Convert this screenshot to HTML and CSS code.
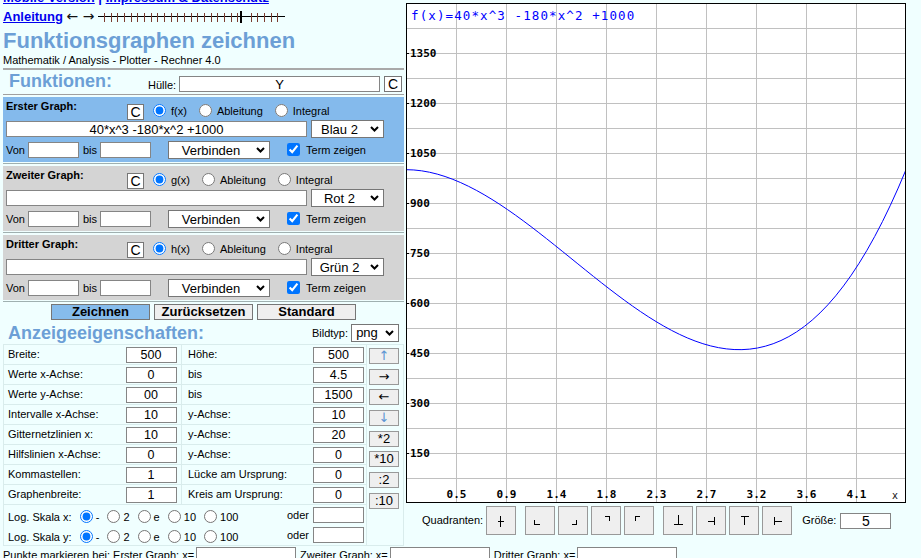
FILE: index.html
```html
<!DOCTYPE html>
<html lang="de">
<head>
<meta charset="utf-8">
<title>Funktionsgraphen zeichnen</title>
<link rel="stylesheet" href="styles.css">
</head>
<body>
<div class="page">
  <div class="main">
    <div class="left">
      <div class="links"><a href="#">Mobile Version</a> | <a href="#">Impressum &amp; Datenschutz</a></div>
      <div class="nav"><a href="#">Anleitung</a> <span class="arrows">← →</span> <svg class="ruler" width="190" height="13" viewBox="0 0 190 13"><path d="M0 5.5H187" stroke="#000" stroke-width="1"/><path d="M6.5 2V11M13.5 2V11M19.5 2V11M26.5 2V11M33.5 2V11M39.5 2V11M46.5 2V11M53.5 2V11M59.5 2V11M66.5 2V11M73.5 2V11M79.5 2V11M86.5 2V11M93.5 2V11M99.5 2V11M106.5 2V11M113.5 2V11M119.5 2V11M126.5 2V11M133.5 2V11M139.5 2V11M153.5 2V11M159.5 2V11M166.5 2V11M173.5 2V11M179.5 2V11" stroke="#7a3b2e" stroke-width="1"/><path d="M143 0V12" stroke="#000" stroke-width="2"/></svg></div>
      <h1 class="title">Funktionsgraphen zeichnen</h1>
      <div class="subtitle">Mathematik / Analysis - Plotter - Rechner 4.0</div>
      <div class="rule"></div>

      <div class="funchead">
        <h2 class="heading fh">Funktionen:</h2>
        <span class="huelle-label">Hülle:</span>
        <input class="txt huelle" type="text" value="Y">
        <button class="cbtn cbtn-h">C</button>
      </div>

      <div class="gsec blue">
        <div class="grow1">
          <span class="gtitle">Erster Graph:</span>
          <button class="cbtn">C</button>
          <label class="opt first"><input type="radio" name="t1" checked><span>f(x)</span></label>
          <label class="opt"><input type="radio" name="t1"><span>Ableitung</span></label>
          <label class="opt"><input type="radio" name="t1"><span>Integral</span></label>
        </div>
        <div class="grow2">
          <input class="txt term" type="text" value="40*x^3 -180*x^2 +1000">
          <span class="sel colsel"><select><option>Blau 2</option></select><svg class="chev" width="9" height="6" viewBox="0 0 9 6"><path d="M1 1L4.5 4.5L8 1" fill="none" stroke="#000" stroke-width="2"/></svg></span>
        </div>
        <div class="grow3">
          <span>Von</span><input class="txt small" type="text"><span class="bis">bis</span><input class="txt small" type="text">
          <span class="sel modesel"><select><option>Verbinden</option></select><svg class="chev" width="9" height="6" viewBox="0 0 9 6"><path d="M1 1L4.5 4.5L8 1" fill="none" stroke="#000" stroke-width="2"/></svg></span>
          <label class="chk"><input type="checkbox" checked><span>Term zeigen</span></label>
        </div>
      </div>
      <div class="sep"></div>

      <div class="gsec gray">
        <div class="grow1">
          <span class="gtitle">Zweiter Graph:</span>
          <button class="cbtn">C</button>
          <label class="opt first"><input type="radio" name="t2" checked><span>g(x)</span></label>
          <label class="opt"><input type="radio" name="t2"><span>Ableitung</span></label>
          <label class="opt"><input type="radio" name="t2"><span>Integral</span></label>
        </div>
        <div class="grow2">
          <input class="txt term" type="text" value="">
          <span class="sel colsel"><select><option>Rot 2</option></select><svg class="chev" width="9" height="6" viewBox="0 0 9 6"><path d="M1 1L4.5 4.5L8 1" fill="none" stroke="#000" stroke-width="2"/></svg></span>
        </div>
        <div class="grow3">
          <span>Von</span><input class="txt small" type="text"><span class="bis">bis</span><input class="txt small" type="text">
          <span class="sel modesel"><select><option>Verbinden</option></select><svg class="chev" width="9" height="6" viewBox="0 0 9 6"><path d="M1 1L4.5 4.5L8 1" fill="none" stroke="#000" stroke-width="2"/></svg></span>
          <label class="chk"><input type="checkbox" checked><span>Term zeigen</span></label>
        </div>
      </div>
      <div class="sep"></div>

      <div class="gsec gray">
        <div class="grow1">
          <span class="gtitle">Dritter Graph:</span>
          <button class="cbtn">C</button>
          <label class="opt first"><input type="radio" name="t3" checked><span>h(x)</span></label>
          <label class="opt"><input type="radio" name="t3"><span>Ableitung</span></label>
          <label class="opt"><input type="radio" name="t3"><span>Integral</span></label>
        </div>
        <div class="grow2">
          <input class="txt term" type="text" value="">
          <span class="sel colsel"><select><option>Grün 2</option></select><svg class="chev" width="9" height="6" viewBox="0 0 9 6"><path d="M1 1L4.5 4.5L8 1" fill="none" stroke="#000" stroke-width="2"/></svg></span>
        </div>
        <div class="grow3">
          <span>Von</span><input class="txt small" type="text"><span class="bis">bis</span><input class="txt small" type="text">
          <span class="sel modesel"><select><option>Verbinden</option></select><svg class="chev" width="9" height="6" viewBox="0 0 9 6"><path d="M1 1L4.5 4.5L8 1" fill="none" stroke="#000" stroke-width="2"/></svg></span>
          <label class="chk"><input type="checkbox" checked><span>Term zeigen</span></label>
        </div>
      </div>
      <div class="sep"></div>

      <div class="actions">
        <button class="act primary">Zeichnen</button>
        <button class="act">Zurücksetzen</button>
        <button class="act">Standard</button>
      </div>

      <div class="propshead">
        <h2 class="heading ph">Anzeigeeigenschaften:</h2>
        <span class="bildtyp">Bildtyp:</span>
        <span class="sel pngsel"><select><option>png</option></select><svg class="chev" width="9" height="6" viewBox="0 0 9 6"><path d="M1 1L4.5 4.5L8 1" fill="none" stroke="#000" stroke-width="2"/></svg></span>
      </div>

      <div class="props">
        <div class="btncol">
          <button class="pbtn arr up">↑</button>
          <button class="pbtn arr">→</button>
          <button class="pbtn arr">←</button>
          <button class="pbtn arr up">↓</button>
          <button class="pbtn">*2</button>
          <button class="pbtn">*10</button>
          <button class="pbtn">:2</button>
          <button class="pbtn">:10</button>
        </div>

        <div class="c lab1">Breite:</div><div class="c inp b1"><input class="txt val" type="text" value="500"></div><div class="c lab2">Höhe:</div><div class="c inp b2"><input class="txt val" type="text" value="500"></div>
        <div class="c lab1">Werte x-Achse:</div><div class="c inp b1"><input class="txt val" type="text" value="0"></div><div class="c lab2">bis</div><div class="c inp b2"><input class="txt val" type="text" value="4.5"></div>
        <div class="c lab1">Werte y-Achse:</div><div class="c inp b1"><input class="txt val" type="text" value="00"></div><div class="c lab2">bis</div><div class="c inp b2"><input class="txt val" type="text" value="1500"></div>
        <div class="c lab1">Intervalle x-Achse:</div><div class="c inp b1"><input class="txt val" type="text" value="10"></div><div class="c lab2">y-Achse:</div><div class="c inp b2"><input class="txt val" type="text" value="10"></div>
        <div class="c lab1">Gitternetzlinien x:</div><div class="c inp b1"><input class="txt val" type="text" value="10"></div><div class="c lab2">y-Achse:</div><div class="c inp b2"><input class="txt val" type="text" value="20"></div>
        <div class="c lab1">Hilfslinien x-Achse:</div><div class="c inp b1"><input class="txt val" type="text" value="0"></div><div class="c lab2">y-Achse:</div><div class="c inp b2"><input class="txt val" type="text" value="0"></div>
        <div class="c lab1">Kommastellen:</div><div class="c inp b1"><input class="txt val" type="text" value="1"></div><div class="c lab2">Lücke am Ursprung:</div><div class="c inp b2"><input class="txt val" type="text" value="0"></div>
        <div class="c lab1">Graphenbreite:</div><div class="c inp b1"><input class="txt val" type="text" value="1"></div><div class="c lab2">Kreis am Ursprung:</div><div class="c inp b2"><input class="txt val" type="text" value="0"></div>

        <div class="c logcell"><span class="logtext">Log. Skala x: <input type="radio" name="lx" checked>- <input type="radio" name="lx">2 <input type="radio" name="lx">e <input type="radio" name="lx">10 <input type="radio" name="lx">100</span><span class="oder">oder</span></div><div class="c inp b2 nol"><input class="txt val" type="text" value=""></div>
        <div class="c logcell"><span class="logtext">Log. Skala y: <input type="radio" name="ly" checked>- <input type="radio" name="ly">2 <input type="radio" name="ly">e <input type="radio" name="ly">10 <input type="radio" name="ly">100</span><span class="oder">oder</span></div><div class="c inp b2 nol"><input class="txt val" type="text" value=""></div>
      </div>
    </div>

    <div class="right">
      <svg class="plot" width="500" height="500" viewBox="0 0 500 500">
        <rect x="0" y="0" width="500" height="500" fill="#fff"/>
        <g stroke="#c0c0c0" stroke-width="1" shape-rendering="crispEdges" fill="none">
          <path d="M50.5 0V500M100.5 0V500M150.5 0V500M200.5 0V500M250.5 0V500M300.5 0V500M350.5 0V500M400.5 0V500M450.5 0V500"/>
          <path d="M0 25.5H500M0 50.5H500M0 75.5H500M0 100.5H500M0 125.5H500M0 150.5H500M0 175.5H500M0 200.5H500M0 225.5H500M0 250.5H500M0 275.5H500M0 300.5H500M0 325.5H500M0 350.5H500M0 375.5H500M0 400.5H500M0 425.5H500M0 450.5H500M0 475.5H500"/>
        </g>
        <path d="M1 50.5H3M1 100.5H3M1 150.5H3M1 200.5H3M1 250.5H3M1 300.5H3M1 350.5H3M1 400.5H3M1 450.5H3" stroke="#000" stroke-width="1" shape-rendering="crispEdges"/>
        <g class="ylab">
          <text x="4" y="54.3">1350</text>
          <text x="4" y="104.3">1200</text>
          <text x="4" y="154.3">1050</text>
          <text x="4" y="204.3">900</text>
          <text x="4" y="254.3">750</text>
          <text x="4" y="304.3">600</text>
          <text x="4" y="354.3">450</text>
          <text x="4" y="404.3">300</text>
          <text x="4" y="454.3">150</text>
        </g>
        <g class="xlab">
          <text x="50.5" y="495">0.5</text>
          <text x="100.5" y="495">0.9</text>
          <text x="150.5" y="495">1.4</text>
          <text x="200.5" y="495">1.8</text>
          <text x="250.5" y="495">2.3</text>
          <text x="300.5" y="495">2.7</text>
          <text x="350.5" y="495">3.2</text>
          <text x="400.5" y="495">3.6</text>
          <text x="450.5" y="495">4.1</text>
        </g>
        <text class="xname" x="486" y="496">x</text>
        <path d="M0 166.67C166.67 166.67 333.33 571.67 500 166.67" fill="none" stroke="#0000ff" stroke-width="1"/>
        <text class="fterm" x="5" y="17">f(x)=40*x^3 -180*x^2 +1000</text>
        <rect x="0.5" y="0.5" width="499" height="499" fill="none" stroke="#000" stroke-width="1" shape-rendering="crispEdges"/>
      </svg>

      <div class="quad">
        <span class="qlabel">Quadranten:</span>
        <button class="qbtn"><svg width="28" height="27" viewBox="0 0 28 27"><path d="M13.5 9V20M11 14.5H17" stroke="#000" fill="none" shape-rendering="crispEdges"/></svg></button>
        <button class="qbtn gap"><svg width="28" height="27" viewBox="0 0 28 27"><path d="M8.5 13V18M8 17.5H14" stroke="#000" fill="none" shape-rendering="crispEdges"/></svg></button>
        <button class="qbtn"><svg width="28" height="27" viewBox="0 0 28 27"><path d="M17.5 13V18M13 17.5H18" stroke="#000" fill="none" shape-rendering="crispEdges"/></svg></button>
        <button class="qbtn"><svg width="28" height="27" viewBox="0 0 28 27"><path d="M13 9.5H18M17.5 9V14" stroke="#000" fill="none" shape-rendering="crispEdges"/></svg></button>
        <button class="qbtn"><svg width="28" height="27" viewBox="0 0 28 27"><path d="M10 9.5H15M10.5 9V14" stroke="#000" fill="none" shape-rendering="crispEdges"/></svg></button>
        <button class="qbtn gap"><svg width="28" height="27" viewBox="0 0 28 27"><path d="M14.5 8V17M10 17.5H19" stroke="#000" fill="none" shape-rendering="crispEdges"/></svg></button>
        <button class="qbtn"><svg width="28" height="27" viewBox="0 0 28 27"><path d="M11 14.5H18M17.5 10V18" stroke="#000" fill="none" shape-rendering="crispEdges"/></svg></button>
        <button class="qbtn"><svg width="28" height="27" viewBox="0 0 28 27"><path d="M11 9.5H19M14.5 9V18" stroke="#000" fill="none" shape-rendering="crispEdges"/></svg></button>
        <button class="qbtn"><svg width="28" height="27" viewBox="0 0 28 27"><path d="M11.5 10V18M11 14.5H19" stroke="#000" fill="none" shape-rendering="crispEdges"/></svg></button>
        <span class="groesse">Größe:</span>
        <input class="txt gr" type="text" value="5">
      </div>
    </div>
  </div>

  <div class="punkte">
    <span>Punkte markieren bei: Erster Graph: x=</span><input class="txt pin" type="text">
    <span class="pl">Zweiter Graph: x=</span><input class="txt pin" type="text">
    <span class="pl">Dritter Graph: x=</span><input class="txt pin" type="text">
  </div>
</div>
</body>
</html>
```

FILE: styles.css
```css
* { box-sizing: border-box; }
html, body { margin: 0; padding: 0; background: #f0ffff; overflow: hidden; }
body { font-family: "Liberation Sans", Arial, sans-serif; font-size: 11px; color: #000; }

.page { padding-left: 3px; width: 921px; }
.main { display: flex; align-items: flex-start; gap: 2px; }
.left { width: 401px; flex: none; }
.right { width: 500px; flex: none; padding-top: 3px; }

/* top links */
.links, .nav { font-size: 13px; font-weight: bold; line-height: 19px; white-space: nowrap; }
.links { margin-top: -12px; color: #0000ee; }
.links a, .nav a { color: #0000ee; }
.arrows { font-family: "DejaVu Sans", sans-serif; font-size: 14px; font-weight: normal; color: #111; }
.ruler { vertical-align: -3px; }

.title { margin: 2px 0 0; font-size: 22px; line-height: 25px; font-weight: bold; color: #6c9fd6; }
.subtitle { margin-top: 1px; font-size: 11px; line-height: 13px; }
.rule { margin-top: 1px; height: 2px; background: #a9a9a9; }

.heading { margin: 0; font-size: 18px; line-height: 21px; font-weight: bold; color: #6c9fd6; }

/* Funktionen header */
.funchead { display: flex; align-items: flex-end; height: 25px; padding-bottom: 2px; border-bottom: 1px solid #a0a0a0; margin-bottom: 2px; }
.fh { width: 145px; padding-left: 6px; }
.huelle-label { width: 31px; line-height: 13px; }
.huelle { width: 201px; font-size: 14px; }
.cbtn { width: 17px; height: 16px; padding: 0; margin: 0; background: #fff; border: 1px solid #767676; border-radius: 0; font-family: "Liberation Sans", Arial, sans-serif; font-size: 14px; line-height: 14px; color: #000; }
.cbtn-h { width: 18px; margin-left: 4px; }

/* inputs */
.txt { height: 16px; margin: 0; padding: 0 2px; border: 1px solid #858585; border-radius: 0; background: #fff; font-family: "Liberation Sans", Arial, sans-serif; font-size: 13px; color: #000; text-align: center; outline: none; }

/* graph sections */
.gsec { height: 65px; padding: 3px 0 0 3px; }
.gsec.blue { background: #84baec; }
.gsec.gray { background: #d4d4d4; }
.sep { height: 1px; background: #9fb0b0; margin: 1px 0 2px; }

.grow1 { display: flex; align-items: flex-start; height: 20px; }
.gtitle { width: 121px; font-weight: bold; line-height: 13px; }
.grow1 .cbtn { margin-top: 4px; }
.opt { display: flex; align-items: flex-start; margin-top: 4px; margin-left: 12px; line-height: 13px; }
.opt.first { margin-left: 9px; }
.opt input { width: 13px; height: 13px; margin: 0 5px 0 0; }
.opt span { margin-top: 1px; }

.grow2 { display: flex; align-items: center; height: 18px; }
.term { width: 301px; }
.colsel { width: 73px; margin-left: 4px; }

.grow3 { display: flex; align-items: center; height: 18px; margin-top: 3px; line-height: 13px; }
.small { width: 51px; margin-left: 3px; }
.bis { margin-left: 4px; }
.modesel { width: 102px; margin-left: 17px; }
.chk { display: flex; align-items: center; margin-left: 17px; }
.chk input { width: 13px; height: 13px; margin: -2px 0 0 0; }
.chk span { margin-left: 6px; }

/* custom select */
.sel { display: inline-flex; align-items: center; height: 18px; background: #fff; border: 1px solid #767676; }
.sel select { -webkit-appearance: none; appearance: none; flex: 1; min-width: 0; height: 16px; padding: 0; margin: 0; border: 0; background: transparent; font-family: "Liberation Sans", Arial, sans-serif; font-size: 13px; color: #000; text-align: center; text-align-last: center; outline: none; }
.chev { flex: none; margin: 0 4px 0 3px; }

/* action buttons */
.actions { display: flex; justify-content: center; gap: 4px; margin-top: 1px; }
.act { width: 99px; height: 16px; padding: 0; margin: 0; border: 1px solid #767676; border-radius: 0; background: #efefef; font-family: "Liberation Sans", Arial, sans-serif; font-size: 13px; font-weight: bold; line-height: 14px; color: #000; }
.act.primary { background: #86bcec; }

/* properties header */
.propshead { display: flex; align-items: center; height: 23px; margin-top: 1px; }
.ph { padding-left: 5px; margin-top: 2px; }
.bildtyp { margin-left: auto; line-height: 13px; margin-top: 2px; }
.pngsel { width: 48px; margin: 0 5px 0 3px; }

/* properties grid */
.props { display: grid; grid-template-columns: 117px 61px 129px 56px 36px; grid-template-rows: repeat(8, 20px) 20px 20px; border: 1px solid #d9ecec; }
.c { display: flex; align-items: center; border-bottom: 1px solid #d9ecec; line-height: 13px; white-space: nowrap; }
.lab1 { padding-left: 4px; }
.lab2 { padding-left: 6px; }
.inp { justify-content: center; }
.b1, .b2 { border-right: 1px solid #d9ecec; }
.nol, .logcell { border-bottom: 0; }
.val { width: 51px; font-size: 12.5px; }
.btncol { grid-column: 5; grid-row: 1 / 11; display: flex; flex-direction: column; gap: 4.7px; padding: 3px 0 0 2px; }
.pbtn { width: 30px; height: 16px; padding: 0; margin: 0; border: 1px solid #999; border-radius: 0; background: #efefef; font-family: "Liberation Sans", Arial, sans-serif; font-size: 13px; line-height: 14px; color: #000; }
.pbtn.arr { font-family: "DejaVu Sans", sans-serif; font-size: 13px; }
.pbtn.up { color: #5d95d3; }
.logcell { grid-column: 1 / span 3; padding-left: 4px; }
.logtext input { width: 13px; height: 13px; margin: 3px 3px 0 5px; vertical-align: -2px; }
.oder { margin-left: auto; padding-right: 2px; }

/* plot */
.plot { display: block; }
.ylab text { font-family: "DejaVu Sans Mono", monospace; font-size: 11px; font-weight: bold; fill: #000; }
.xlab text { font-family: "DejaVu Sans Mono", monospace; font-size: 11px; font-weight: bold; fill: #000; text-anchor: middle; }
.xname { font-family: "DejaVu Sans", sans-serif; font-size: 10px; fill: #222; }
.fterm { font-family: "DejaVu Sans Mono", monospace; font-size: 12.5px; letter-spacing: 1.1px; fill: #0000ff; }

/* quadranten */
.quad { display: flex; align-items: center; height: 29px; margin-top: 3px; padding-left: 16px; }
.qlabel { line-height: 13px; }
.qbtn { width: 30px; height: 29px; padding: 0; margin: 0 0 0 3px; border: 1px solid #999; border-radius: 0; background: #efefef; display: flex; }
.qbtn svg { display: block; }
.qbtn.gap { margin-left: 9px; }
.groesse { margin-left: 10px; line-height: 13px; }
.gr { width: 51px; margin-left: 4px; font-size: 14px; }

/* bottom line */
.punkte { display: flex; align-items: center; height: 18px; font-size: 11px; line-height: 13px; white-space: nowrap; }
.pin { width: 100px; margin-left: 2px; }
.pl { margin-left: 4px; }
```
